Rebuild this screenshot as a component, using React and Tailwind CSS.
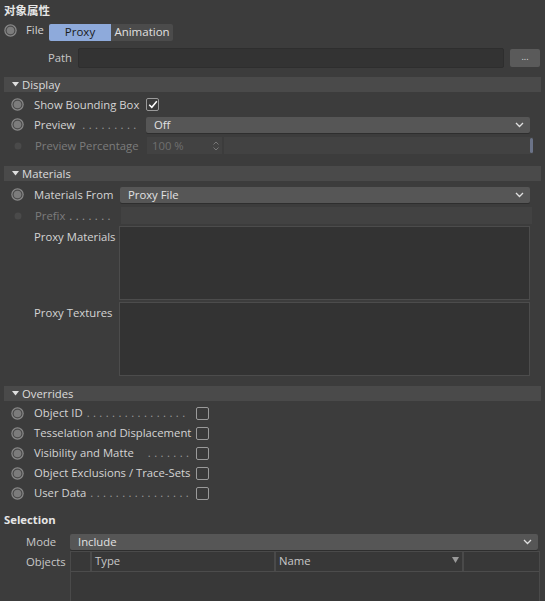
import React from "react";

const font = { fontFamily: '"Open Sans", "Noto Sans", "Noto Sans CJK SC", sans-serif' };

function Radio({ dim }) {
  if (dim)
    return (
      <svg width="12" height="12" viewBox="0 0 12 12" className="shrink-0">
        <circle cx="6" cy="6" r="3.5" fill="#4a4a4a" />
      </svg>
    );
  return (
    <svg width="13" height="13" viewBox="0 0 13 13" className="shrink-0">
      <circle cx="6.5" cy="6.5" r="6.2" fill="#8a8a8a" />
      <circle cx="6.5" cy="6.5" r="5" fill="#4a4a4a" />
      <circle cx="6.5" cy="6.5" r="3.8" fill="#7c7c7c" />
    </svg>
  );
}

function Chevron() {
  return (
    <svg width="9" height="6" viewBox="0 0 9 6" className="shrink-0">
      <path d="M1 1 L4.5 4.5 L8 1" stroke="#e0e0e0" strokeWidth="1.3" fill="none" />
    </svg>
  );
}

function Dropdown({ value, className = "" }) {
  return (
    <div className={`h-[16px] bg-[#565656] rounded-[2px] flex items-center pl-[8px] pr-[6px] text-[#e2e2e2] shadow-[0_1px_0_#2e2e2e] ${className}`}>
      <span className="flex-1">{value}</span>
      <Chevron />
    </div>
  );
}

function Check({ checked }) {
  return (
    <div className="w-[13px] h-[13px] border border-[#9a9a9a] rounded-[2px] bg-[#3a3a3a] flex items-center justify-center shrink-0">
      {checked && (
        <svg width="10" height="9" viewBox="0 0 10 9">
          <path d="M1.2 4.8 L3.8 7.3 L8.8 1.2" stroke="#ffffff" strokeWidth="1.5" fill="none" />
        </svg>
      )}
    </div>
  );
}

function Header({ title, className = "" }) {
  return (
    <div className={`mx-[4px] h-[15px] bg-[#4a4a4a] flex items-center pl-[8px] text-[#dcdcdc] ${className}`}>
      <svg width="7" height="5" viewBox="0 0 7 5" className="mr-[3px]">
        <path d="M0 0 L7 0 L3.5 4.5 Z" fill="#e0e0e0" />
      </svg>
      <span>{title}</span>
    </div>
  );
}

function Dots({ n }) {
  return <span className="text-[#9a9a9a] tracking-[3.4px] ml-[4px] whitespace-nowrap">{".".repeat(n)}</span>;
}

export default function App() {
  return (
    <div className="w-[545px] h-[601px] bg-[#3c3c3c] text-[11.3px] text-[#d4d4d4] overflow-hidden leading-none" style={font}>
      {/* title */}
      <div className="h-[21px] flex items-center pl-[4px] pt-[1px] font-bold text-[#e6e6e6] text-[11.5px]">对象属性</div>

      {/* File row */}
      <div className="h-[22px] flex items-center">
        <div className="ml-[4px] mr-[9px] flex items-center -mt-[4px]"><Radio /></div>
        <span className="w-[23px] -mt-[4px]">File</span>
        <div className="flex h-[17px] rounded-[2px] overflow-hidden">
          <div className="w-[62px] bg-[#8eaadb] text-[#1a1a1a] flex items-center justify-center text-[11.5px]">Proxy</div>
          <div className="w-[62px] bg-[#4b4b4b] text-[#e0e0e0] flex items-center justify-center text-[11.5px]">Animation</div>
        </div>
      </div>

      {/* Path */}
      <div className="mt-[4px] h-[22px] flex items-center">
        <span className="ml-[48px] w-[30px] text-[#c8c8c8]">Path</span>
        <div className="w-[426px] h-[20px] bg-[#333333] border border-[#2e2e2e] rounded-[2px]" />
        <div className="ml-[6px] w-[30px] h-[18px] bg-[#5a5a5a] rounded-[2px] flex items-center justify-center text-[#dddddd] text-[9px] pb-[3px]">...</div>
      </div>

      {/* Display */}
      <Header title="Display" className="mt-[8px]" />
      <div className="mt-[2px]">
        <div className="h-[21px] flex items-center">
          <div className="ml-[11px] mr-[10px] flex"><Radio /></div>
          <span className="w-[112px]">Show Bounding Box</span>
          <Check checked />
        </div>
        <div className="h-[21px] flex items-center -mt-[1px]">
          <div className="ml-[11px] mr-[10px] flex"><Radio /></div>
          <span className="w-[112px] flex">Preview<span className="ml-[3px]"><Dots n={9} /></span></span>
          <Dropdown value="Off" className="w-[384px]" />
        </div>
        <div className="h-[21px] flex items-center text-[#7c7c7c]">
          <div className="ml-[12px] mr-[11px] flex"><Radio dim /></div>
          <span className="w-[112px]">Preview Percentage</span>
          <div className="w-[75px] h-[17px] bg-[#424242] flex items-center pl-[5px] text-[#6f6f6f]">
            <span className="flex-1">100 %</span>
            <div className="flex flex-col items-center mr-[3px] text-[#777] leading-none">
              <svg width="6" height="4" viewBox="0 0 6 4"><path d="M0.5 3.5 L3 1 L5.5 3.5" stroke="#777" fill="none" /></svg>
              <svg width="6" height="4" viewBox="0 0 6 4" className="mt-[2px]"><path d="M0.5 0.5 L3 3 L5.5 0.5" stroke="#777" fill="none" /></svg>
            </div>
          </div>
          <div className="ml-[2px] w-[309px] h-[17px] bg-[#424242] flex justify-end items-center">
            <div className="w-[3px] h-[15px] rounded-[2px] bg-[#6b7388]" />
          </div>
        </div>
      </div>

      {/* Materials */}
      <Header title="Materials" className="mt-[10px]" />
      <div className="mt-[3px]">
        <div className="h-[21px] flex items-center">
          <div className="ml-[11px] mr-[10px] flex"><Radio /></div>
          <span className="w-[86px]">Materials From</span>
          <Dropdown value="Proxy File" className="w-[410px]" />
        </div>
        <div className="h-[21px] flex items-center text-[#7c7c7c]">
          <div className="ml-[12px] mr-[11px] flex"><Radio dim /></div>
          <span className="w-[86px] flex">Prefix<Dots n={7} /></span>
          <div className="w-[411px] h-[17px] bg-[#424242]" />
        </div>
        <div className="flex">
          <span className="ml-[34px] w-[85px] pt-[5px]">Proxy Materials</span>
          <div className="w-[411px] h-[74px] bg-[#333333] border border-[#4c4c4c]" />
        </div>
        <div className="flex mt-[2px]">
          <span className="ml-[34px] w-[85px] pt-[5px]">Proxy Textures</span>
          <div className="w-[411px] h-[74px] bg-[#333333] border border-[#4c4c4c]" />
        </div>
      </div>

      {/* Overrides */}
      <Header title="Overrides" className="mt-[10px]" />
      <div className="mt-[2px]">
        {[
          ["Object ID", 16],
          ["Tesselation and Displacement", 0],
          ["Visibility and Matte", 7],
          ["Object Exclusions / Trace-Sets", 0],
          ["User Data", 16],
        ].map(([t, n]) => (
          <div key={t} className="h-[20px] flex items-center">
            <div className="ml-[11px] mr-[10px] flex"><Radio /></div>
            <span className="w-[162px] shrink-0 flex whitespace-nowrap">
              {t}
              {n > 0 && <span className={t === "Visibility and Matte" ? "ml-[10px]" : ""}><Dots n={n} /></span>}
            </span>
            <Check />
          </div>
        ))}
      </div>

      {/* Selection */}
      <div className="mt-[10px] h-[14px] flex items-center pl-[4px] font-bold text-[#e6e6e6]">Selection</div>
      <div className="mt-[6px] h-[18px] flex items-center">
        <span className="ml-[26px] w-[44px] text-[#c8c8c8]">Mode</span>
        <Dropdown value="Include" className="w-[468px]" />
      </div>
      <div className="flex">
        <span className="ml-[26px] w-[44px] text-[#c8c8c8] pt-[5px]">Objects</span>
        <div className="w-[470px] h-[60px] bg-[#383838] border border-[#4a4a4a]">
          <div className="h-[20px] flex border-b border-[#4c4c4c] text-[#c8c8c8]">
            <div className="w-[21px] border-r-2 border-[#4a4a4a]" />
            <div className="w-[184px] border-r-2 border-[#4a4a4a] pl-[3px] pt-[3px]">Type</div>
            <div className="w-[188px] border-r-2 border-[#4a4a4a] pl-[3px] pt-[3px] flex">
              <span className="flex-1">Name</span>
              <svg width="7" height="6" viewBox="0 0 7 6" className="mr-[3px] mt-[2px]"><path d="M0 0 L7 0 L3.5 6 Z" fill="#9a9a9a" /></svg>
            </div>
            <div className="flex-1" />
          </div>
        </div>
      </div>
    </div>
  );
}
